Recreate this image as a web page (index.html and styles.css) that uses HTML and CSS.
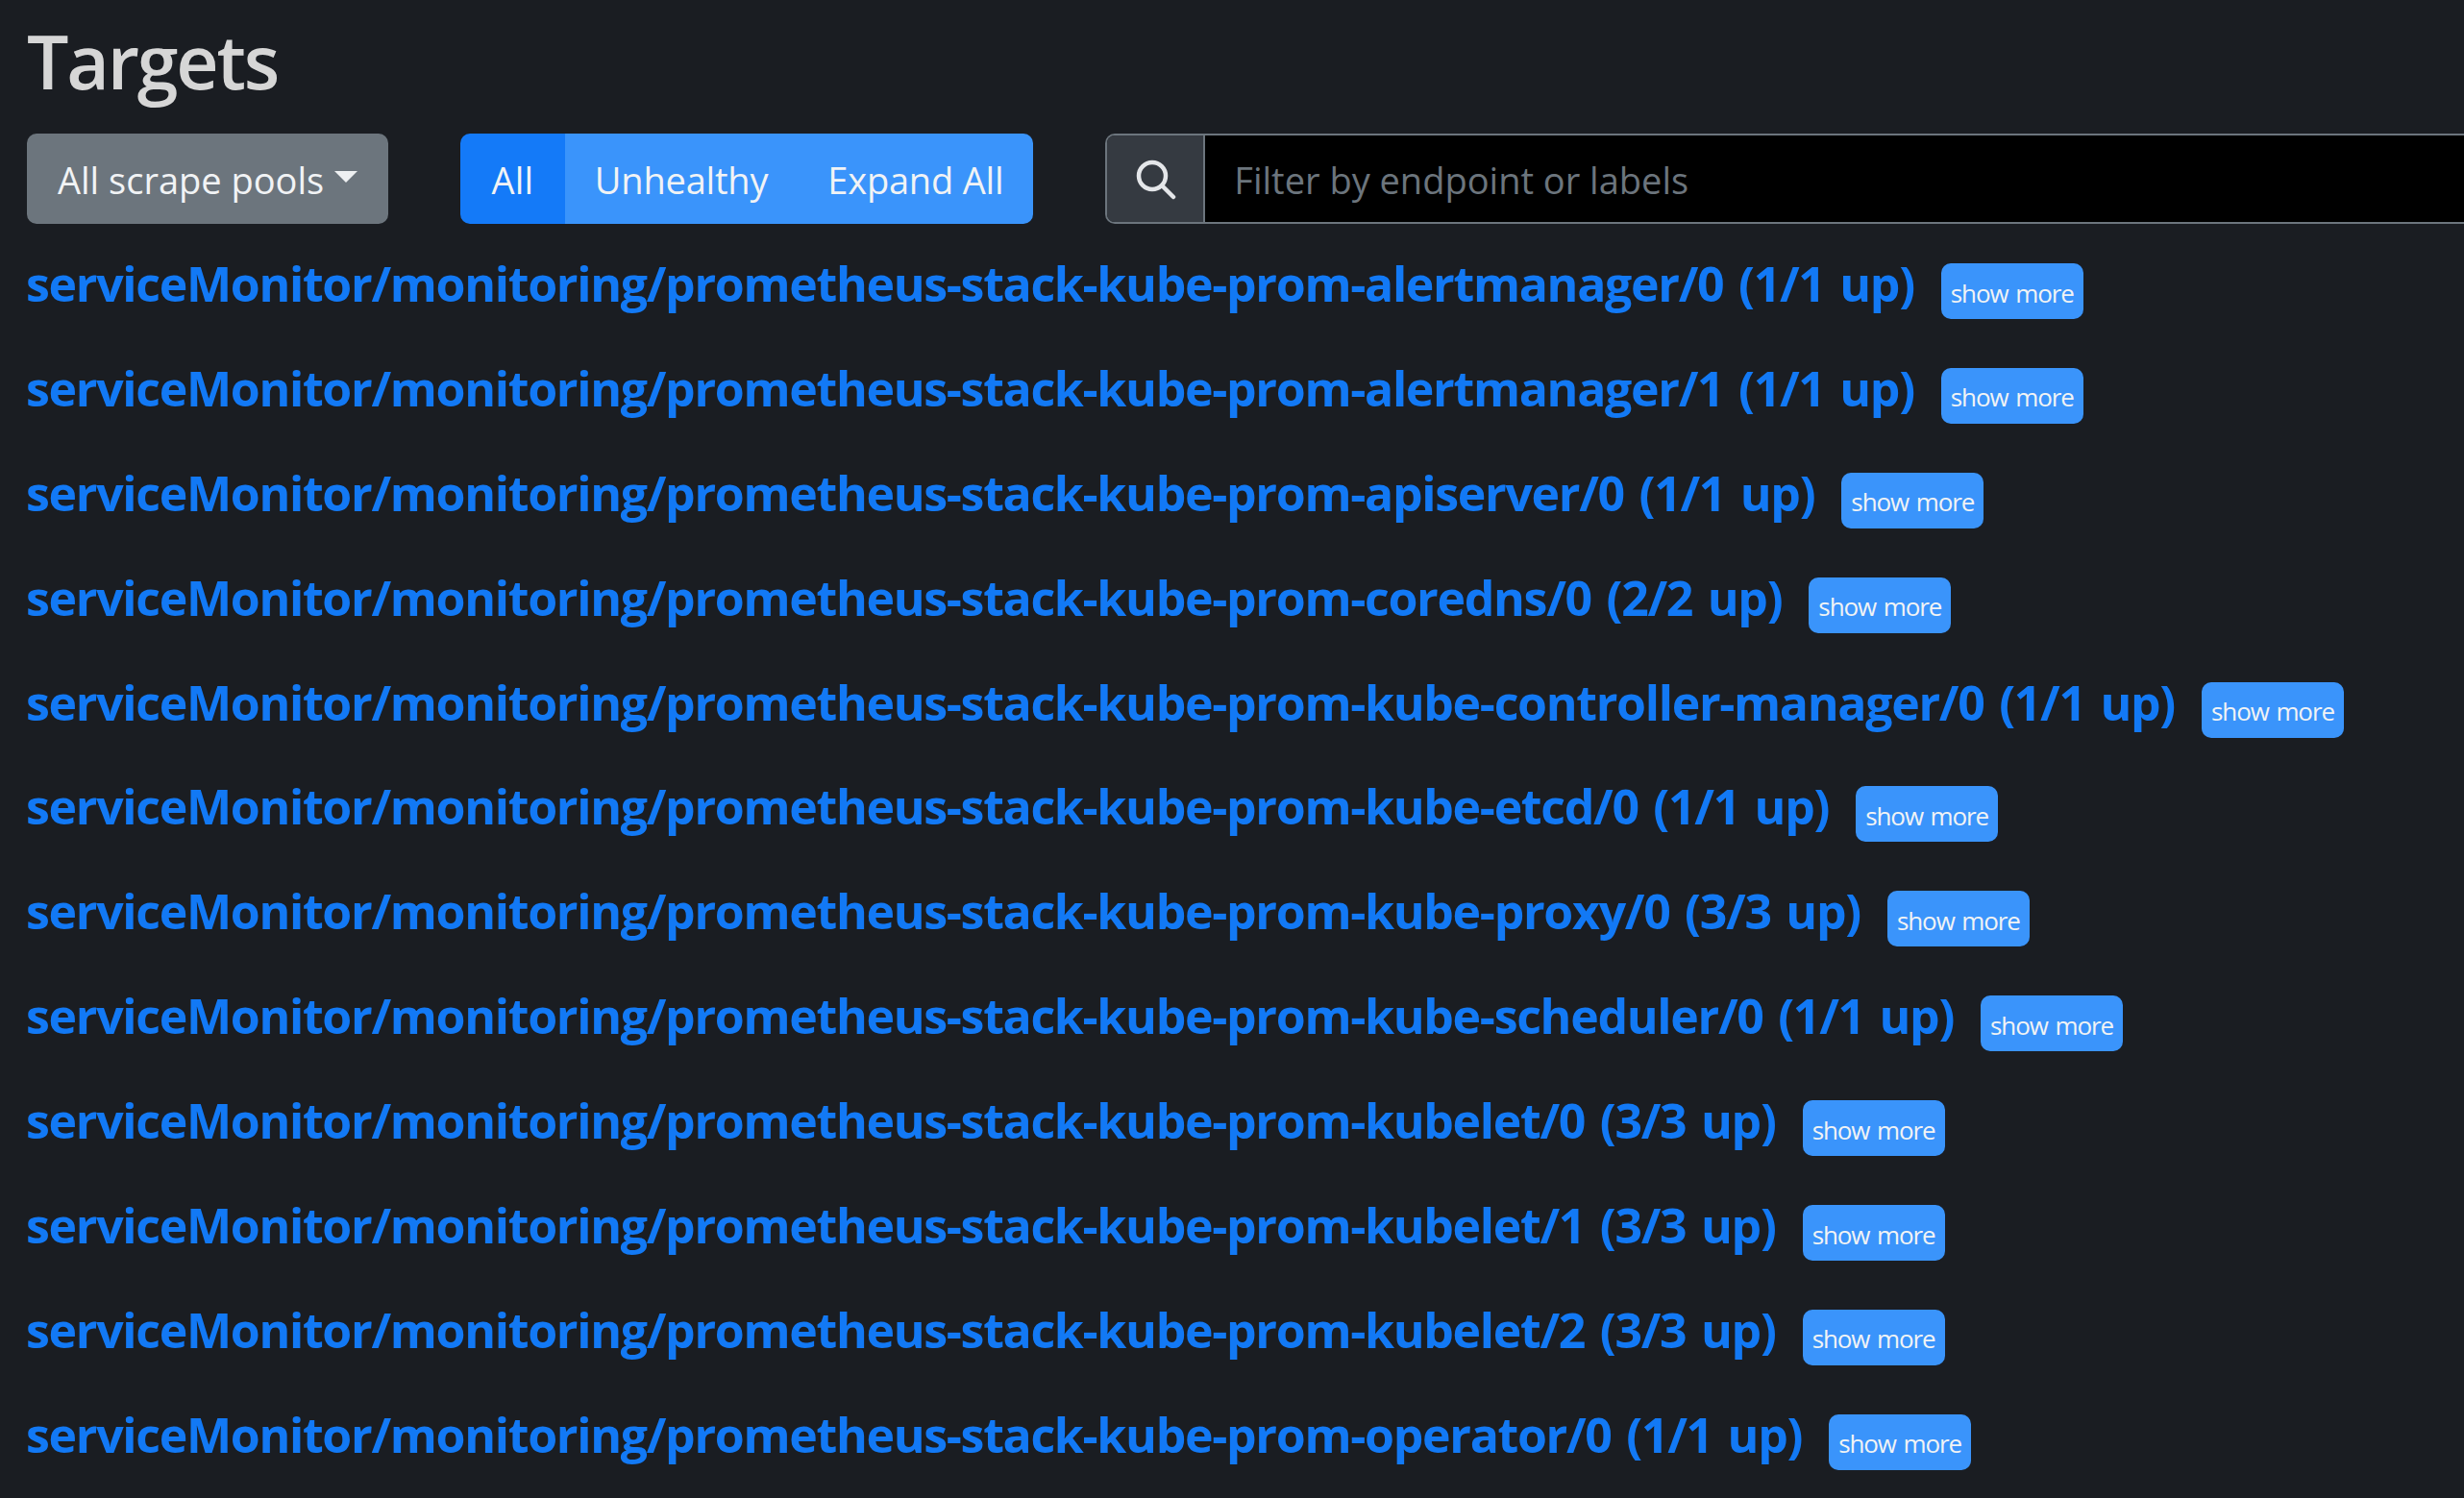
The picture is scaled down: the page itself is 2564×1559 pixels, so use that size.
FILE: index.html
```html
<!DOCTYPE html>
<html lang="en">
<head>
<meta charset="utf-8">
<title>Targets</title>
<link rel="stylesheet" href="styles.css">
</head>
<body>
<main class="page">
  <h2 class="title">Targets</h2>
  <div class="toolbar">
    <button class="btn dropdown">All scrape pools<span class="caret"></span></button>
    <div class="btn-group">
      <button class="btn seg active">All</button>
      <button class="btn seg">Unhealthy</button>
      <button class="btn seg">Expand All</button>
    </div>
    <div class="filter">
      <span class="addon">
        <svg class="search-icon" viewBox="0 0 44 44"><circle cx="19" cy="19" r="14" fill="none" stroke="currentColor" stroke-width="4.500"/><path d="M30 30L41 41" fill="none" stroke="currentColor" stroke-width="4.500" stroke-linecap="round"/></svg>
      </span>
      <input class="filter-input" type="text" placeholder="Filter by endpoint or labels">
    </div>
  </div>
  <section class="pools">
    <div class="pool"><a class="pool-link">serviceMonitor/monitoring/prometheus-stack-kube-prom-alertmanager/0 (1/1 up)</a><button class="more">show more</button></div>
    <div class="pool"><a class="pool-link">serviceMonitor/monitoring/prometheus-stack-kube-prom-alertmanager/1 (1/1 up)</a><button class="more">show more</button></div>
    <div class="pool"><a class="pool-link">serviceMonitor/monitoring/prometheus-stack-kube-prom-apiserver/0 (1/1 up)</a><button class="more">show more</button></div>
    <div class="pool"><a class="pool-link">serviceMonitor/monitoring/prometheus-stack-kube-prom-coredns/0 (2/2 up)</a><button class="more">show more</button></div>
    <div class="pool"><a class="pool-link">serviceMonitor/monitoring/prometheus-stack-kube-prom-kube-controller-manager/0 (1/1 up)</a><button class="more">show more</button></div>
    <div class="pool"><a class="pool-link">serviceMonitor/monitoring/prometheus-stack-kube-prom-kube-etcd/0 (1/1 up)</a><button class="more">show more</button></div>
    <div class="pool"><a class="pool-link">serviceMonitor/monitoring/prometheus-stack-kube-prom-kube-proxy/0 (3/3 up)</a><button class="more">show more</button></div>
    <div class="pool"><a class="pool-link">serviceMonitor/monitoring/prometheus-stack-kube-prom-kube-scheduler/0 (1/1 up)</a><button class="more">show more</button></div>
    <div class="pool"><a class="pool-link">serviceMonitor/monitoring/prometheus-stack-kube-prom-kubelet/0 (3/3 up)</a><button class="more">show more</button></div>
    <div class="pool"><a class="pool-link">serviceMonitor/monitoring/prometheus-stack-kube-prom-kubelet/1 (3/3 up)</a><button class="more">show more</button></div>
    <div class="pool"><a class="pool-link">serviceMonitor/monitoring/prometheus-stack-kube-prom-kubelet/2 (3/3 up)</a><button class="more">show more</button></div>
    <div class="pool"><a class="pool-link">serviceMonitor/monitoring/prometheus-stack-kube-prom-operator/0 (1/1 up)</a><button class="more">show more</button></div>
  </section>
</main>
</body>
</html>
```
FILE: styles.css
```css
* { box-sizing: border-box; }
html, body { margin: 0; height: 100%; overflow: hidden; background: #1a1d22; }
body { font-family: "Open Sans", "Noto Sans", sans-serif; color: #d4d4d4; }
.page { padding: 17px 0 0 28px; width: 2564px; }
.title { margin: 0; font-size: 77px; line-height: 94px; font-weight: 600; letter-spacing: -2.2px; color: #d6d6d6; height: 122px; }
.toolbar { display: flex; align-items: stretch; height: 94px; }
.btn { border: 0; color: #f1f3f5; font-family: inherit; font-size: 38px; padding: 2px 31px 0; height: 94px; flex: none; }
.dropdown { width: 376px; background: #6c757d; border-radius: 10px; display: flex; align-items: center; white-space: nowrap; padding: 2px 0 0 32px; }
.caret { width: 0; height: 0; margin-left: 11px; margin-top: -6px; border-top: 12px solid #eef0f2; border-left: 12px solid transparent; border-right: 12px solid transparent; }
.btn-group { display: flex; flex: none; margin-left: 75px; border-radius: 10px; overflow: hidden; }
.seg { background: #3a94fb; white-space: nowrap; letter-spacing: -0.2px; }
.seg.active { background: #147af8; padding: 2px 32.5px 0; letter-spacing: 0.2px; }
.filter { display: flex; margin-left: 75px; width: 1440px; flex: none; border: 2px solid #6c757d; border-right: 0; border-radius: 10px 0 0 10px; overflow: hidden; }
.addon { width: 102px; background: #353a41; border-right: 2px solid #6c757d; display: flex; align-items: center; justify-content: center; color: #e4e6e9; flex: none; }
.search-icon { width: 44px; height: 44px; }
.filter-input { flex: 1; background: #000; border: 0; outline: 0; padding: 2px 30px 0; font-family: inherit; font-size: 38px; color: #f1f3f5; }
.filter-input::placeholder { color: #6c757d; opacity: 1; }
.pools { display: flex; flex-direction: column; padding-top: 41px; }
.pool { display: flex; align-items: flex-start; height: 108.9px; }
.pool-link { color: #1279f5; font-size: 50px; line-height: 58px; font-weight: 700; letter-spacing: -1.3px; word-spacing: 4px; white-space: nowrap; margin: -8px 0 0 -1px; }
.more { margin-left: 28px; width: 148px; height: 58px; border: 0; border-radius: 10px; background: #3a94fb; color: #f1f3f5; font-family: inherit; font-size: 26px; letter-spacing: -1.1px; word-spacing: 2px; padding: 3px 0 0; white-space: nowrap; flex: none; }
```
